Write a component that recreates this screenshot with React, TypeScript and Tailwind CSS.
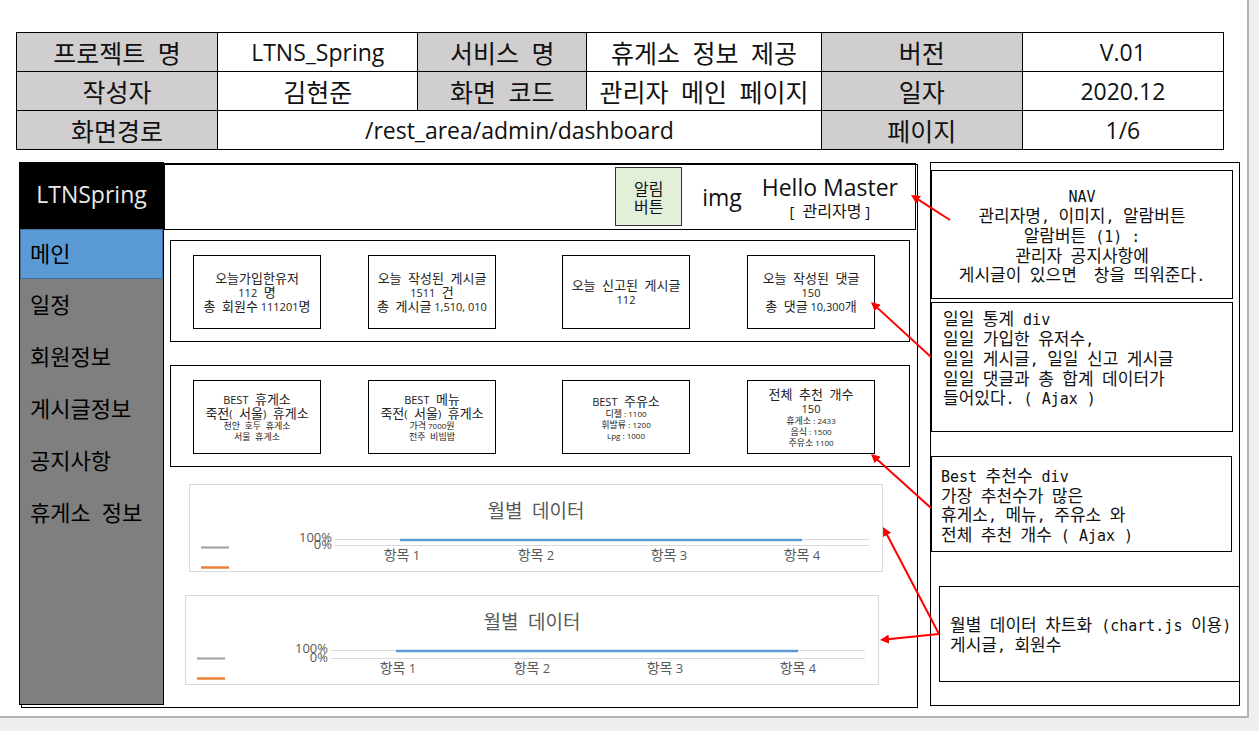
import type { ReactNode } from 'react';

const KO = "font-['Noto_Sans_Mono_CJK_KR','Noto_Sans_CJK_KR',monospace]";
const LATIN = "font-['Open_Sans','Noto_Sans',sans-serif]";
const MONO = "font-['DejaVu_Sans_Mono',monospace]";

/** Sets Latin runs in the given face and leaves Hangul in the inherited one. */
function Mixed({ text, latin }: { text: string; latin: string }) {
  return (
    <>
      {text.split(/( ?[A-Za-z0-9.,%:()[\]]+)/).map((part, i) =>
        i % 2 === 1 ? (
          <span key={i} className={latin}>
            {part}
          </span>
        ) : (
          part
        ),
      )}
    </>
  );
}

function Label({ children }: { children: string }) {
  return (
    <th scope="row" className="border border-black bg-[#d0cece] p-0 font-normal">
      {children}
    </th>
  );
}

function Value({ children, latin = false, span = 1 }: { children: string; latin?: boolean; span?: number }) {
  return (
    <td colSpan={span} className={`border border-black p-0 ${latin ? `text-[23px] ${LATIN}` : ''}`}>
      {children}
    </td>
  );
}

function InfoTable() {
  return (
    <table className="w-full table-fixed border-collapse text-center text-[25px] leading-[38px] whitespace-nowrap text-[#111]">
      <colgroup>
        <col className="w-[201px]" />
        <col className="w-[200px]" />
        <col className="w-[169px]" />
        <col className="w-[234px]" />
        <col className="w-[201px]" />
        <col className="w-[201px]" />
      </colgroup>
      <tbody>
        <tr>
          <Label>프로젝트 명</Label>
          <Value latin>LTNS_Spring</Value>
          <Label>서비스 명</Label>
          <Value>휴게소 정보 제공</Value>
          <Label>버전</Label>
          <Value latin>V.01</Value>
        </tr>
        <tr>
          <Label>작성자</Label>
          <Value>김현준</Value>
          <Label>화면 코드</Label>
          <Value>관리자 메인 페이지</Value>
          <Label>일자</Label>
          <Value latin>2020.12</Value>
        </tr>
        <tr>
          <Label>화면경로</Label>
          <Value latin span={3}>
            /rest_area/admin/dashboard
          </Value>
          <Label>페이지</Label>
          <Value latin>1/6</Value>
        </tr>
      </tbody>
    </table>
  );
}

const MENU = ['메인', '일정', '회원정보', '게시글정보', '공지사항', '휴게소 정보'];

function Sidebar() {
  return (
    <aside className="relative mb-[3px] w-[145px] shrink-0 border border-black bg-[#7f7f7f]">
      <div className={`flex h-[66px] items-center justify-center bg-black pb-1 text-[23px] text-[#e8e8e8] ${LATIN}`}>
        LTNSpring
      </div>
      <nav className="text-[22px] text-black">
        {MENU.map((item, i) => (
          <a
            key={item}
            href="#"
            className={
              i === 0
                ? 'flex h-[50px] items-center border border-[#41719c] bg-[#5b9bd5] pb-1 pl-[9px]'
                : 'flex h-[52px] items-center pb-1 pl-[10px]'
            }
          >
            {item}
          </a>
        ))}
      </nav>
    </aside>
  );
}

type CardData = { main: string[]; detail?: string[] };

const TODAY: CardData[] = [
  { main: ['오늘가입한유저', '112 명', '총 회원수 111201명'] },
  { main: ['오늘 작성된 게시글', '1511 건', '총 게시글 1,510, 010'] },
  { main: ['오늘 신고된 게시글', '112'] },
  { main: ['오늘 작성된 댓글', '150', '총 댓글 10,300개'] },
];

const BEST: CardData[] = [
  { main: ['BEST 휴게소', '죽전( 서울) 휴게소'], detail: ['천안 호두 휴게소', '서울 휴게소'] },
  { main: ['BEST 메뉴', '죽전( 서울) 휴게소'], detail: ['가격 7000원', '전주 비빔밥'] },
  { main: ['BEST 주유소'], detail: ['디젤 : 1100', '휘발류 : 1200', 'Lpg : 1000'] },
  { main: ['전체 추천 개수', '150'], detail: ['휴게소 : 2433', '음식 : 1500', '주유소 1100'] },
];

function CardRow({ cards }: { cards: CardData[] }) {
  return (
    <section className="grid grid-cols-[175fr_194fr_185fr_162fr] border border-black pt-[14px] pb-[12px] pl-[22px]">
      {cards.map((card, i) => (
        <div
          key={i}
          className="flex h-[74px] w-[128px] flex-col items-center justify-center border border-black whitespace-nowrap text-[#222]"
        >
          {card.main.map((line) => (
            <p key={line} className="text-[13px] leading-[14px]">
              <Mixed text={line} latin={`text-[11px] leading-none ${LATIN}`} />
            </p>
          ))}
          {card.detail?.map((line) => (
            <p key={line} className="text-[9px] leading-[11px]">
              <Mixed text={line} latin={`text-[8px] leading-none ${LATIN}`} />
            </p>
          ))}
        </div>
      ))}
    </section>
  );
}

function MonthlyChart({ height, zero, labelY }: { height: number; zero: number; labelY: number }) {
  const points = [213, 347, 480, 613];
  return (
    <svg viewBox={`0 0 694 ${height}`} className="block w-full" role="img" aria-label="월별 데이터">
      <rect x="0.5" y="0.5" width="693" height={height - 1} fill="#fff" stroke="#d9d9d9" />
      <text x="347" y="34" textAnchor="middle" className="fill-[#595959] text-[19px]">
        월별 데이터
      </text>
      <line x1="146" x2="680" y1="55.5" y2="55.5" stroke="#d9d9d9" />
      <line x1="146" x2="680" y1={zero} y2={zero} stroke="#d9d9d9" />
      <line x1="211" x2="613" y1="56" y2="56" stroke="#5b9bd5" strokeWidth="2.5" />
      <line x1="12" x2="40" y1="63.5" y2="63.5" stroke="#a5a5a5" strokeWidth="2.2" />
      <line x1="12" x2="40" y1="83.5" y2="83.5" stroke="#ed7d31" strokeWidth="2.4" />
      <g className={`fill-[#595959] text-[13px] ${LATIN}`} textAnchor="end">
        <text x="143" y="58">
          100%
        </text>
        <text x="143" y={zero + 3}>
          0%
        </text>
      </g>
      <g className="fill-[#595959] text-[14px]" textAnchor="middle">
        {points.map((x, i) => (
          <text key={x} x={x} y={labelY}>
            항목<tspan className={`text-[13px] ${LATIN}`}> {i + 1}</tspan>
          </text>
        ))}
      </g>
    </svg>
  );
}

function Dashboard() {
  return (
    <main className="relative flex min-w-0 flex-1">
      <div className="absolute top-[2px] right-0 bottom-0 left-[2px] border border-black" />
      <Sidebar />
      <div className="relative min-w-0 flex-1 pt-px pr-[2px] pb-[23px]">
        <header className="flex h-[67px] items-center justify-end gap-[20px] border border-black pr-[17px] text-[#111]">
          <button type="button" className="h-[59px] w-[67px] border border-[#333] bg-[#e2f0d9] text-[16px] leading-[18px]">
            알림
            <br />
            버튼
          </button>
          <span className={`text-[23px] leading-[30px] ${LATIN}`}>img</span>
          <div className="text-center">
            <p className={`text-[23px] leading-[26px] ${LATIN}`}>Hello Master</p>
            <p className="text-[16px] leading-[20px]">
              <Mixed text="[ 관리자명 ]" latin={`text-[15px] leading-none ${LATIN}`} />
            </p>
          </div>
        </header>
        <div className="flex flex-col gap-[23px] pt-[10px] pr-[6px] pl-[6px]">
          <CardRow cards={TODAY} />
          <CardRow cards={BEST} />
        </div>
        <div className="pt-[17px] pr-[33px] pl-[25px]">
          <MonthlyChart height={88} zero={61.5} labelY={76} />
        </div>
        <div className="pt-[23px] pr-[37px] pl-[21px]">
          <MonthlyChart height={90} zero={63.5} labelY={78} />
        </div>
      </div>
    </main>
  );
}

function Note({ className, lines }: { className: string; lines: string[] }) {
  const rows: ReactNode[] = lines.map((line) => (
    <p key={line}>
      <Mixed text={line} latin={`text-[15px] leading-none ${MONO}`} />
    </p>
  ));
  return <div className={`flex flex-col border border-black whitespace-pre ${className}`}>{rows}</div>;
}

function Notes() {
  return (
    <aside className="mb-[2px] w-[310px] shrink-0 border border-black pt-[7px] text-[17px] leading-[19px] text-[#111]">
      <Note
        className="mr-[6px] h-[129px] items-center justify-center"
        lines={[
          'NAV',
          '관리자명, 이미지, 알람버튼',
          '알람버튼 (1) :',
          '관리자 공지사항에',
          '게시글이 있으면  창을 띄워준다.',
        ]}
      />
      <Note
        className="mt-[3px] mr-[6px] h-[130px] pt-[5px] pl-[11px]"
        lines={[
          '일일 통계 div',
          '일일 가입한 유저수,',
          '일일 게시글, 일일 신고 게시글',
          '일일 댓글과 총 합계 데이터가',
          '들어있다. ( Ajax )',
        ]}
      />
      <Note
        className="mt-[24px] mr-[7px] h-[96px] pt-[8px] pl-[9px]"
        lines={['Best 추천수 div', '가장 추천수가 많은', '휴게소, 메뉴, 주유소 와', '전체 추천 개수 ( Ajax )']}
      />
      <Note
        className="mt-[34px] ml-[8px] h-[96px] justify-center border-r-0 pl-[10px]"
        lines={['월별 데이터 차트화 (chart.js 이용)', '게시글, 회원수']}
      />
    </aside>
  );
}

const ARROWS = [
  [950, 220, 911, 195],
  [931, 357, 871, 302],
  [931, 508, 871, 454],
  [939, 634, 883, 527],
  [939, 634, 880, 640],
];

function Arrows() {
  return (
    <svg
      viewBox="860 162 100 546"
      className="pointer-events-none absolute top-0 right-[280px] h-[546px] w-[100px]"
      aria-hidden="true"
    >
      <defs>
        <marker id="head" markerUnits="userSpaceOnUse" markerWidth="10" markerHeight="9" refX="9" refY="4.5" orient="auto">
          <path d="M0 0 L9 4.5 L0 9 Z" fill="#f00" />
        </marker>
      </defs>
      {ARROWS.map(([x1, y1, x2, y2]) => {
        const length = Math.hypot(x2 - x1, y2 - y1);
        const dx = ((x2 - x1) / length) * 5;
        const dy = ((y2 - y1) / length) * 5;
        return (
          <g key={`${x2}-${y2}`}>
            <line x1={x1} y1={y1} x2={x2 - dx} y2={y2 - dy} stroke="#f00" strokeWidth="2" />
            <line x1={x1} y1={y1} x2={x2} y2={y2} markerEnd="url(#head)" />
          </g>
        );
      })}
    </svg>
  );
}

export default function App() {
  return (
    <div className={`min-h-screen bg-[#efefef] pr-[10px] ${KO}`}>
      <div className="border-r-2 border-b-2 border-[#b4b4b4] bg-white pt-[32px] pb-[8px]">
        <div className="pr-[23px] pl-[16px]">
          <InfoTable />
        </div>
        <div className="relative mt-[12px] mr-[7px] ml-[19px] flex gap-[12px]">
          <Dashboard />
          <Notes />
          <Arrows />
        </div>
      </div>
    </div>
  );
}
